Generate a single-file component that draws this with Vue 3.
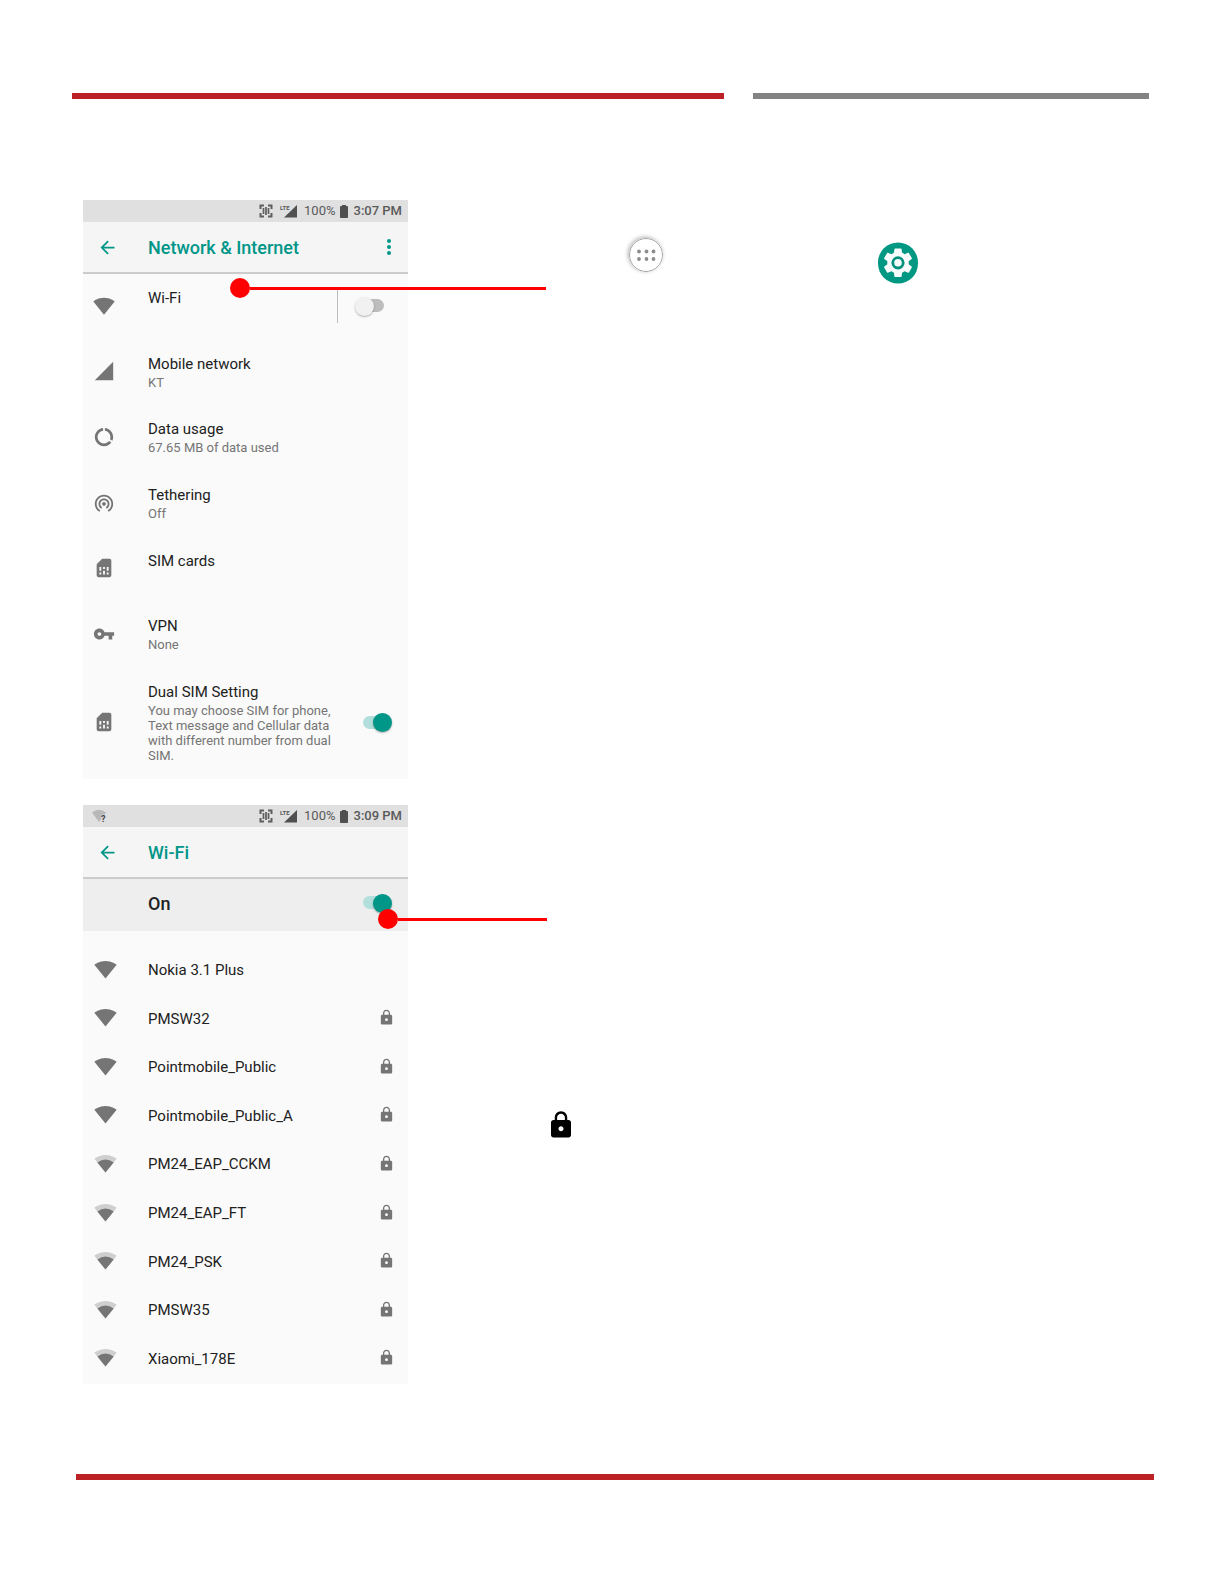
<script setup>
import { ref } from 'vue'

const wifiEnabled = ref(false)
const dualSim = ref(true)
const wifiOn = ref(true)

const paths = {
  wifi: 'M12.01 21.49L23.64 7c-.45-.34-4.93-4-11.64-4C5.28 3 .81 6.66.36 7l11.63 14.49.01.01.01-.01z',
  mobile: 'M2 22h20V2z',
  data: 'M13 2.05v3.03c3.39.49 6 3.39 6 6.92 0 .9-.18 1.75-.48 2.54l2.6 1.53c.56-1.24.88-2.62.88-4.07 0-5.18-3.95-9.45-9-9.95zM12 19c-3.87 0-7-3.13-7-7 0-3.53 2.61-6.43 6-6.92V2.05c-5.06.5-9 4.76-9 9.95 0 5.52 4.47 10 9.99 10 3.31 0 6.24-1.61 8.06-4.09l-2.6-1.53C16.17 17.98 14.21 19 12 19z',
  tether: 'M12 11c-1.1 0-2 .9-2 2s.9 2 2 2 2-.9 2-2-.9-2-2-2zm6 2c0-3.31-2.69-6-6-6s-6 2.69-6 6c0 2.22 1.21 4.15 3 5.19l1-1.74c-1.19-.7-2-1.97-2-3.45 0-2.21 1.79-4 4-4s4 1.79 4 4c0 1.48-.81 2.75-2 3.45l1 1.74c1.79-1.04 3-2.97 3-5.19zM12 3C6.48 3 2 7.48 2 13c0 3.7 2.01 6.92 4.99 8.65l1-1.73C5.61 18.53 4 15.96 4 13c0-4.42 3.58-8 8-8s8 3.58 8 8c0 2.96-1.61 5.53-4 6.92l1 1.73c2.99-1.73 5-4.95 5-8.65 0-5.52-4.48-10-10-10z',
  sim: 'M19.99 4c0-1.1-.89-2-1.99-2h-8L4 8v12c0 1.1.9 2 2 2h12.01c1.1 0 1.99-.9 1.99-2l-.01-16zM9 19H7v-2h2v2zm8 0h-2v-2h2v2zm-8-4H7v-4h2v4zm4 4h-2v-4h2v4zm0-6h-2v-2h2v2zm4 2h-2v-4h2v4z',
  key: 'M12.65 10C11.83 7.67 9.61 6 7 6c-3.31 0-6 2.69-6 6s2.69 6 6 6c2.61 0 4.83-1.67 5.65-4H17v4h4v-4h2v-4H12.65zM7 14c-1.1 0-2-.9-2-2s.9-2 2-2 2 .9 2 2-.9 2-2 2z',
  lock: 'M18 8h-1V6c0-2.76-2.24-5-5-5S7 3.24 7 6v2H6c-1.1 0-2 .9-2 2v10c0 1.1.9 2 2 2h12c1.1 0 2-.9 2-2V10c0-1.1-.9-2-2-2zm-6 9c-1.1 0-2-.9-2-2s.9-2 2-2 2 .9 2 2-.9 2-2 2zm3.1-9H8.9V6c0-1.71 1.39-3.1 3.1-3.1 1.71 0 3.1 1.39 3.1 3.1v2z',
  back: 'M20 11H7.83l5.59-5.59L12 4l-8 8 8 8 1.41-1.41L7.83 13H20v-2z',
  gear: 'M19.43 12.98c.04-.32.07-.64.07-.98s-.03-.66-.07-.98l2.11-1.65c.19-.15.24-.42.12-.64l-2-3.46c-.12-.22-.39-.3-.61-.22l-2.49 1c-.52-.4-1.08-.73-1.69-.98l-.38-2.65C14.46 2.18 14.25 2 14 2h-4c-.25 0-.46.18-.49.42l-.38 2.65c-.61.25-1.17.59-1.69.98l-2.49-1c-.23-.09-.49 0-.61.22l-2 3.46c-.13.22-.07.49.12.64l2.11 1.65c-.04.32-.07.65-.07.98s.03.66.07.98l-2.11 1.65c-.19.15-.24.42-.12.64l2 3.46c.12.22.39.3.61.22l2.49-1c.52.4 1.08.73 1.69.98l.38 2.65c.03.24.24.42.49.42h4c.25 0 .46-.18.49-.42l.38-2.65c.61-.25 1.17-.59 1.69-.98l2.49 1c.23.09.49 0 .61-.22l2-3.46c.12-.22.07-.49-.12-.64l-2.11-1.65z',
}

const settings = [
  { id: 'wifi', title: 'Wi-Fi', icon: 'wifi' },
  { id: 'mobile', title: 'Mobile network', sub: 'KT', icon: 'mobile' },
  { id: 'data', title: 'Data usage', sub: '67.65 MB of data used', icon: 'data' },
  { id: 'tether', title: 'Tethering', sub: 'Off', icon: 'tether' },
  { id: 'sim', title: 'SIM cards', icon: 'sim' },
  { id: 'vpn', title: 'VPN', sub: 'None', icon: 'key' },
  {
    id: 'dual',
    title: 'Dual SIM Setting',
    sub: 'You may choose SIM for phone, Text message and Cellular data with different number from dual SIM.',
    icon: 'sim',
  },
]

const networks = [
  { name: 'Nokia 3.1 Plus', full: true, locked: false },
  { name: 'PMSW32', full: true, locked: true },
  { name: 'Pointmobile_Public', full: true, locked: true },
  { name: 'Pointmobile_Public_A', full: true, locked: true },
  { name: 'PM24_EAP_CCKM', full: false, locked: true },
  { name: 'PM24_EAP_FT', full: false, locked: true },
  { name: 'PM24_PSK', full: false, locked: true },
  { name: 'PMSW35', full: false, locked: true },
  { name: 'Xiaomi_178E', full: false, locked: true },
]

const screens = [
  { id: 'network', title: 'Network & Internet', time: '3:07 PM' },
  { id: 'wifi', title: 'Wi-Fi', time: '3:09 PM' },
]
</script>

<template>
  <div class="page">
    <header class="rules">
      <div class="rule rule-red"></div>
      <div class="rule rule-gray"></div>
    </header>

    <main class="steps">
      <section v-for="screen in screens" :key="screen.id" class="step">
        <div class="phone">
          <div class="status">
            <svg v-if="screen.id === 'wifi'" class="status-wifi" viewBox="0 0 16 16">
              <path d="M0 4.500Q7 -1 14 4.500L7 14z" fill="#b8b8b8" />
              <text x="9" y="14" font-size="9" font-weight="700" fill="#444" stroke="#e0e0e0" stroke-width="1" paint-order="stroke">?</text>
            </svg>
            <svg class="scan" viewBox="0 0 14 14" fill="none" stroke="#5f5f5f">
              <path d="M5 1.500H1.500V5M1.500 9v3.500H5M9 1.500h3.500V5M12.500 9v3.500H9" stroke-width="2" />
              <path d="M4.500 4v6M7 3v8M9.500 4v6" stroke-width="1.700" />
            </svg>
            <svg class="lte" viewBox="0 0 17 14">
              <path d="M4 13.500L17 1v12.500z" fill="#505050" />
              <text x="0" y="6" font-size="6" font-weight="700" fill="#5a5a5a" stroke="#e0e0e0" stroke-width="1" paint-order="stroke">LTE</text>
            </svg>
            <span class="percent">100%</span>
            <svg class="battery" viewBox="0 0 8 13" fill="#505050">
              <rect y="1" width="8" height="12" rx="1" />
              <rect x="2" width="4" height="2" />
            </svg>
            <span class="time">{{ screen.time }}</span>
          </div>

          <div class="appbar">
            <button class="icon-btn back" type="button" aria-label="Back">
              <svg class="i21" viewBox="0 0 24 24"><path :d="paths.back" /></svg>
            </button>
            <h2 class="title">{{ screen.title }}</h2>
            <button v-if="screen.id === 'network'" class="icon-btn more" type="button" aria-label="More options">
              <svg viewBox="0 0 4 16">
                <circle cx="2" cy="2" r="2" /><circle cx="2" cy="8" r="2" /><circle cx="2" cy="14" r="2" />
              </svg>
            </button>
          </div>

          <ul v-if="screen.id === 'network'" class="settings">
            <li v-for="item in settings" :key="item.id" class="setting">
              <div class="lead">
                <svg class="i22" viewBox="0 0 24 24"><path :d="paths[item.icon]" /></svg>
              </div>
              <div class="text">
                <label v-if="item.id === 'wifi' || item.id === 'dual'" class="name" :for="'switch-' + item.id">{{ item.title }}</label>
                <span v-else class="name">{{ item.title }}</span>
                <p v-if="item.sub" class="sub">{{ item.sub }}</p>
              </div>
              <div v-if="item.id === 'wifi'" class="action divided">
                <input id="switch-wifi" v-model="wifiEnabled" class="switch" type="checkbox" />
              </div>
              <div v-if="item.id === 'dual'" class="action">
                <input id="switch-dual" v-model="dualSim" class="switch" type="checkbox" />
              </div>
            </li>
          </ul>

          <template v-else>
            <div class="master">
              <label class="master-label" for="switch-master">On</label>
              <input id="switch-master" v-model="wifiOn" class="switch" type="checkbox" />
            </div>
            <ul class="networks">
              <li v-for="net in networks" :key="net.name" class="network">
                <div class="lead lead-network">
                  <svg class="i23" viewBox="0 0 24 24">
                    <path v-if="net.full" :d="paths.wifi" />
                    <template v-else>
                      <path :d="paths.wifi" fill="#cfcfcf" />
                      <path d="M12 21.500L20.500 10.900Q12 4.900 3.500 10.900z" />
                    </template>
                  </svg>
                </div>
                <span class="name ssid">{{ net.name }}</span>
                <svg v-if="net.locked" class="lock" viewBox="0 0 24 24"><path :d="paths.lock" /></svg>
              </li>
            </ul>
          </template>
        </div>

        <div class="notes" :class="'notes-' + screen.id">
          <template v-if="screen.id === 'network'">
            <svg class="apps" viewBox="0 0 34 34">
              <circle cx="17" cy="17" r="16.500" fill="#fff" stroke="#8a8a8a" stroke-width="0.800" />
              <g fill="#8c8c8c">
                <circle cx="10" cy="13.500" r="1.900" /><circle cx="17.500" cy="13.500" r="1.900" /><circle cx="24.500" cy="13.500" r="1.900" />
                <circle cx="10" cy="21" r="1.900" /><circle cx="17.500" cy="21" r="1.900" /><circle cx="24.500" cy="21" r="1.900" />
              </g>
            </svg>
            <svg class="gear" viewBox="0 0 40 42">
              <rect width="40" height="41" y="0.500" rx="20" fill="#009883" />
              <path :d="paths.gear" transform="translate(2.840 3.600) scale(1.430)" fill="#f8fbfb" />
              <circle cx="20" cy="20.800" r="5.200" fill="none" stroke="#00917f" stroke-width="2.800" />
            </svg>
          </template>
          <svg v-else class="big-lock" viewBox="0 0 24 24"><path :d="paths.lock" /></svg>
        </div>

        <div class="callout" :class="'callout-' + screen.id"></div>
      </section>
    </main>

    <footer class="footer"><div class="rule rule-red"></div></footer>
  </div>
</template>

<style>
body {
  margin: 0;
  background: #fff;
}
</style>

<style scoped>
.page {
  font-family: Roboto, "Liberation Sans", sans-serif;
  color: #212121;
}
.rules {
  display: grid;
  grid-template-columns: 652fr 396fr;
  gap: 29px;
  padding: 93px 75px 0 72px;
}
.rule {
  height: 6px;
}
.rule-red {
  background: #bc2126;
}
.rule-gray {
  background: #838383;
}
.steps {
  display: flex;
  flex-direction: column;
  gap: 26px;
  padding: 101px 75px 90px 83px;
}
.step {
  position: relative;
  display: flex;
}
.phone {
  flex: none;
  display: flex;
  flex-direction: column;
  width: 325px;
  min-height: 579px;
  background: #fafafa;
}
.status {
  display: flex;
  align-items: center;
  justify-content: flex-end;
  height: 22px;
  padding: 0 6px 0 9px;
  background: #e0e0e0;
  color: #5a5a5a;
  font-size: 13px;
  line-height: 24px;
}
.status svg {
  flex: none;
}
.status-wifi {
  width: 16px;
  height: 16px;
  margin-right: auto;
}
.scan {
  width: 14px;
  height: 14px;
  margin-right: 7px;
}
.lte {
  width: 17px;
  height: 14px;
  margin-right: 7px;
}
.battery {
  width: 8px;
  height: 13px;
  margin: 0 6px 0 4px;
}
.time {
  font-weight: 500;
}
.appbar {
  display: flex;
  align-items: center;
  height: 50px;
  padding-right: 17px;
  border-bottom: 2px solid #cccccc;
  background: #f5f5f5;
}
.icon-btn {
  display: flex;
  padding: 0;
  border: 0;
  background: none;
  fill: #009688;
}
.back {
  width: 65px;
  padding-left: 14px;
}
.more svg {
  width: 4px;
  height: 16px;
}
.title {
  flex: 1;
  margin: 0;
  padding-top: 2px;
  color: #009688;
  font-size: 18px;
  font-weight: 500;
  line-height: 24px;
}
.i21 {
  width: 21px;
  height: 21px;
}
.i22 {
  width: 22px;
  height: 22px;
}
.i23 {
  width: 23px;
  height: 23px;
}
.settings,
.networks {
  flex: 1;
  display: grid;
  margin: 0;
  padding: 0;
  list-style: none;
}
.settings {
  grid-template-rows: repeat(6, 1fr) 111px;
}
.setting {
  display: flex;
  align-items: center;
  padding: 0 16px 2px 0;
}
.lead {
  flex: none;
  display: flex;
  box-sizing: border-box;
  width: 65px;
  padding-left: 10px;
  fill: #757575;
}
.lead-network {
  padding-left: 11px;
}
.text {
  flex: 1;
  align-self: flex-start;
  padding-top: 14px;
}
.name {
  display: block;
  font-size: 15px;
  line-height: 20px;
}
.sub {
  max-width: 188px;
  margin: 1px 0 0;
  color: #757575;
  font-size: 13px;
  line-height: 15px;
}
.action {
  display: flex;
  align-items: center;
}
.divided {
  height: 34px;
  padding-left: 17px;
  border-left: 1px solid #bdbdbd;
}
.switch {
  appearance: none;
  flex: none;
  display: flex;
  align-items: center;
  position: relative;
  width: 37px;
  height: 20px;
  margin: 0;
}
.switch::before {
  content: "";
  width: 21px;
  height: 13px;
  margin-left: 8px;
  border-radius: 7px;
  background: #bdbdbd;
}
.switch::after {
  content: "";
  position: absolute;
  top: 1px;
  left: 0;
  width: 19px;
  height: 19px;
  border-radius: 50%;
  background: #f1f1f1;
  box-shadow: 0 1px 2px rgba(0, 0, 0, 0.3);
}
.switch:checked::before {
  background: #b2dfdb;
}
.switch:checked::after {
  left: 18px;
  background: #009688;
}
.master {
  display: flex;
  align-items: center;
  justify-content: space-between;
  height: 47px;
  padding: 0 16px 5px 65px;
  background: #eeeeee;
}
.master-label {
  padding-top: 2px;
  font-size: 18px;
  font-weight: 500;
  line-height: 24px;
}
.networks {
  grid-template-rows: repeat(9, 1fr);
  padding: 14px 0 2px;
}
.network {
  display: flex;
  align-items: center;
  padding-right: 17px;
}
.ssid {
  flex: 1;
  padding-top: 2px;
}
.lock {
  width: 17px;
  height: 17px;
  margin-right: -4px;
  fill: #757575;
}
.notes {
  flex: 1;
  display: flex;
  align-items: flex-start;
}
.notes-network {
  gap: 215px;
  padding: 38px 0 0 221px;
}
.notes-wifi {
  padding: 305px 0 0 138px;
}
.apps {
  width: 34px;
  height: 34px;
  border-radius: 50%;
  box-shadow: -1px -1px 4px rgba(0, 0, 0, 0.3);
}
.gear {
  width: 40px;
  height: 42px;
  margin-top: 4px;
}
.big-lock {
  width: 30px;
  height: 30px;
}
.callout {
  position: absolute;
  display: flex;
  align-items: center;
  height: 20px;
}
.callout::before {
  content: "";
  width: 20px;
  height: 20px;
  border-radius: 50%;
  background: #ff0000;
}
.callout::after {
  content: "";
  flex: 1;
  height: 3px;
  background: #ff0000;
}
.callout-network {
  top: 78px;
  left: 147px;
  width: 316px;
}
.callout-wifi {
  top: 104px;
  left: 295px;
  width: 169px;
}
.footer {
  padding: 0 70px 104px 76px;
}
</style>
